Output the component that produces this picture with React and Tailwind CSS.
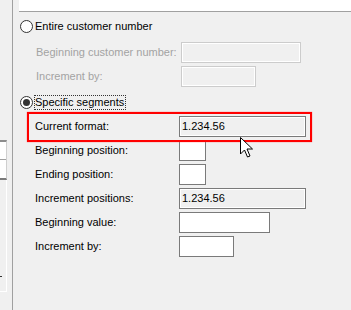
import React from 'react';

const FONT = { fontFamily: '"Liberation Sans", Arial, sans-serif' };

function Radio({ checked }) {
  return (
    <div className="w-[13px] h-[13px] rounded-full border border-[#333333] bg-white flex items-center justify-center shrink-0">
      {checked && <div className="w-[7px] h-[7px] rounded-full bg-[#333333]" />}
    </div>
  );
}

function Box({ w, kind = 'edit', value }) {
  const cls = {
    edit: 'border-[#7a7a7a] bg-white',
    readonly: 'border-[#7a7a7a] bg-[#f0f0f0] shadow-[inset_0_0_0_1px_#ffffff]',
    disabled: 'border-[#cccccc] bg-[#f0f0f0] shadow-[inset_0_0_0_1px_#ffffff]',
  }[kind];
  return (
    <div className={`h-[21px] border ${cls} flex items-center pl-[2px] text-[11px] text-black`} style={{ width: w }}>
      {value}
    </div>
  );
}

function Row({ label, labelW, children, muted }) {
  return (
    <div className="flex items-center h-[21px]">
      <div className={`shrink-0 text-[11px] ${muted ? 'text-[#a3a3a3]' : 'text-black'}`} style={{ width: labelW }}>{label}</div>
      {children}
    </div>
  );
}

export default function App() {
  return (
    <div className="relative w-[351px] h-[310px] bg-[#f0f0f0] overflow-hidden flex" style={FONT}>
      {/* left neighbour panel */}
      <div className="w-[7px] shrink-0 pt-[140px]">
        <div className="h-[40px] bg-white border-t-2 border-b-2 border-t-[#8c8c8c] border-b-[#7a7a7a] border-r border-r-[#cfcfcf] flex flex-col">
          <div className="h-[17px]" />
          <div className="h-px bg-[#a0a0a0]" />
        </div>
        <div className="relative h-[112px] border-r border-b border-white">
          <div className="absolute left-0 top-[96px] w-[2px] h-px bg-[#333333]" />
        </div>
      </div>
      <div className="w-[5px] shrink-0" />
      <div className="w-px h-full bg-[#a0a0a0] shrink-0" />
      <div className="w-[6px] shrink-0" />

      <div className="flex-1 flex flex-col">
        <div className="h-[12px] bg-white border-b border-[#a0a0a0]" />

        <div className="mt-[8px] h-[13px] flex items-center pl-[1px]">
          <Radio />
          <span className="ml-[2px] text-[11px] text-black">Entire customer number</span>
        </div>

        <div className="mt-[9px] flex flex-col gap-[3px] pl-[17px]">
          <Row label="Beginning customer number:" labelW={145} muted>
            <Box w={120} kind="disabled" />
          </Row>
          <Row label="Increment by:" labelW={145} muted>
            <Box w={75} kind="disabled" />
          </Row>
        </div>

        <div className="mt-[9px] h-[13px] flex items-center pl-[1px]">
          <Radio checked />
          <span className="ml-[1px] h-[15px] leading-[13px] border border-dotted border-[#333333] text-[11px] text-black pr-[1px]">Specific segments</span>
        </div>

        <div className="mt-[7px] flex flex-col gap-[3px] pl-[16px]">
          <Row label="Current format:" labelW={144}>
            <Box w={127} kind="readonly" value="1.234.56" />
          </Row>
          <Row label="Beginning position:" labelW={144}>
            <Box w={27} />
          </Row>
          <Row label="Ending position:" labelW={144}>
            <Box w={27} />
          </Row>
          <Row label="Increment positions:" labelW={144}>
            <Box w={127} kind="readonly" value="1.234.56" />
          </Row>
          <Row label="Beginning value:" labelW={144}>
            <Box w={91} />
          </Row>
          <Row label="Increment by:" labelW={144}>
            <Box w={55} />
          </Row>
        </div>
      </div>

      {/* red highlight annotation */}
      <div className="absolute left-[27px] top-[112px] w-[285px] h-[30px] border-2 border-[#ff0000] shadow-[0_0_1px_#ff5555]" />

      {/* mouse pointer */}
      <svg className="absolute left-[240px] top-[137px]" width="14" height="22" viewBox="0 0 14 22">
        <path d="M0.5 0.5 L0.5 17 L4.5 13 L7.5 20 L10 19 L7 12 L12.5 12 Z" fill="#ffffff" stroke="#000000" strokeWidth="1" />
      </svg>
    </div>
  );
}
